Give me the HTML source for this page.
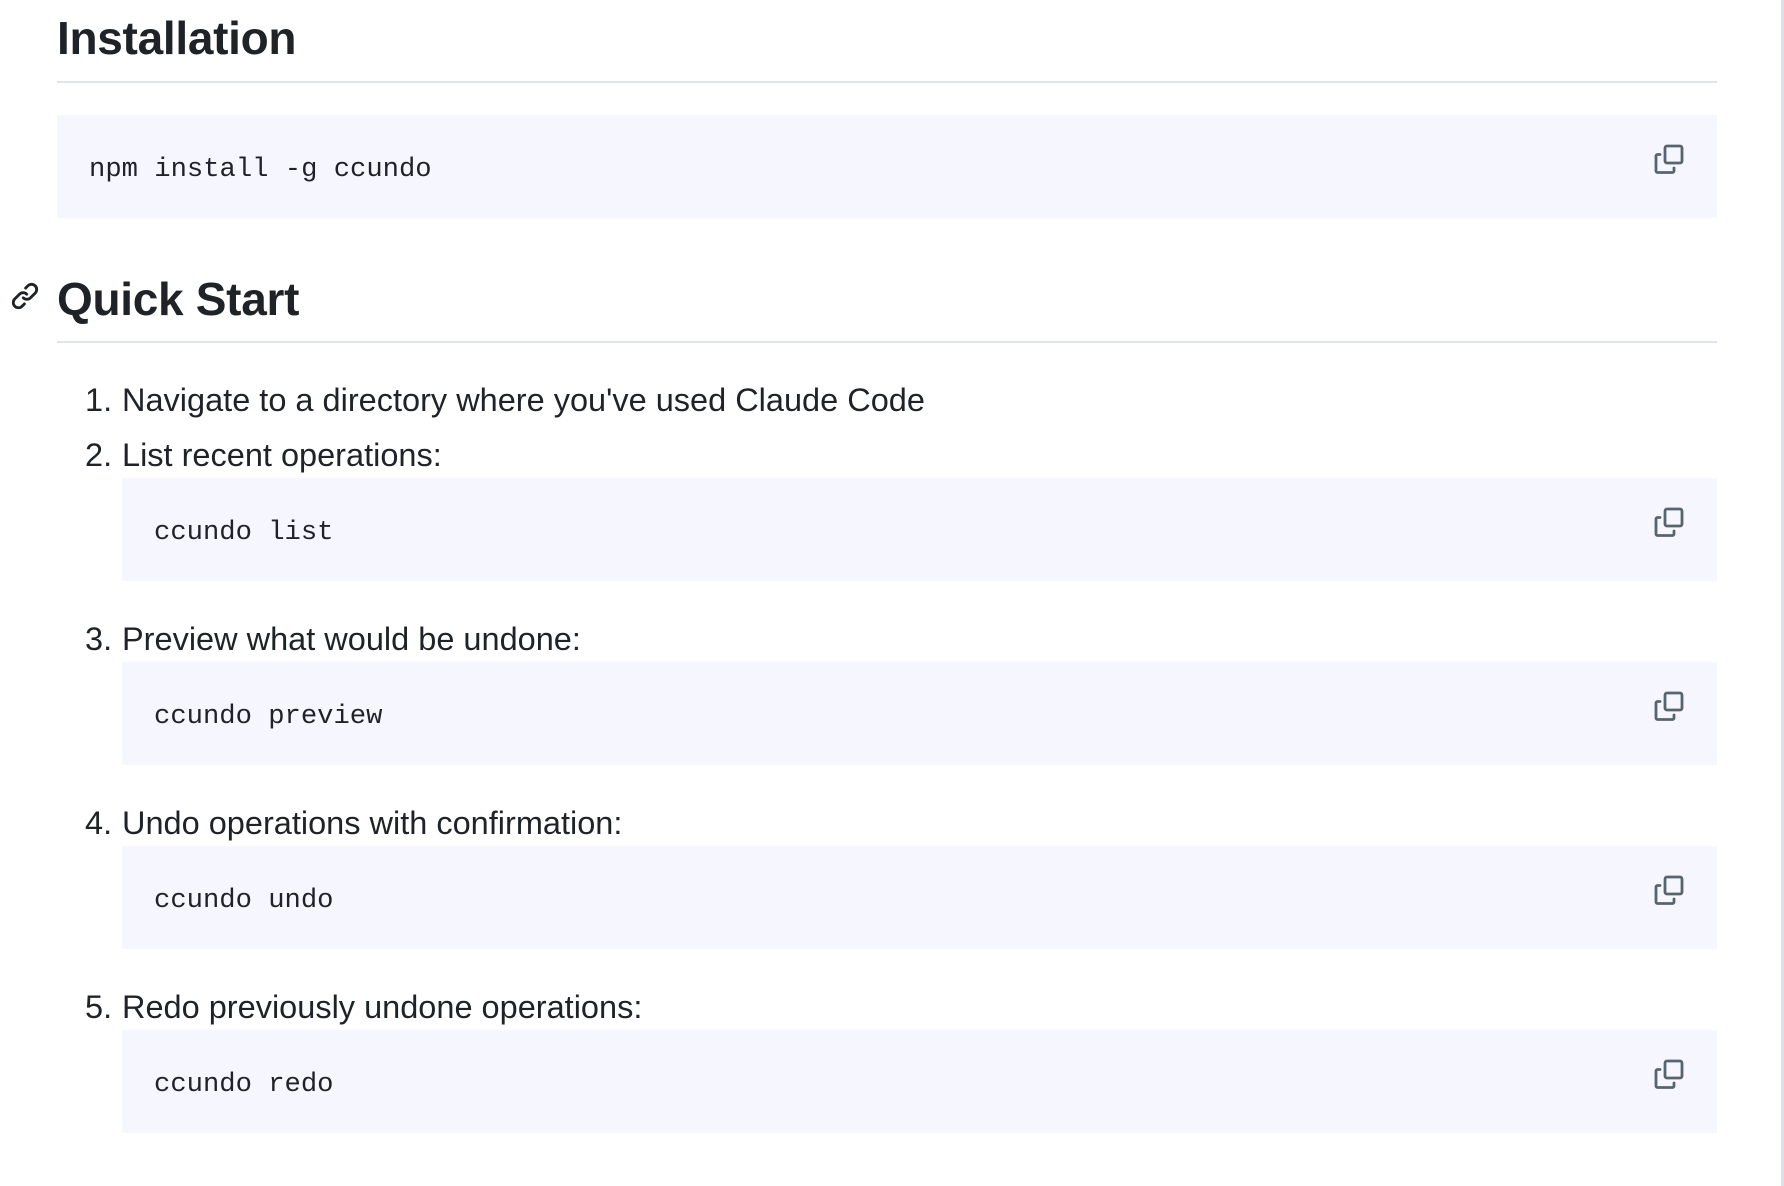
<!DOCTYPE html>
<html><head><meta charset="utf-8"><style>
html,body{margin:0;padding:0;background:#fff;}
body{width:1784px;height:1186px;position:relative;overflow:hidden;font-family:"Liberation Sans",sans-serif;color:#1f2328;}
.a{position:absolute;white-space:nowrap;}
h2{margin:0;position:absolute;left:57px;font-size:46px;line-height:46px;font-weight:700;letter-spacing:-0.3px;}
.hr{position:absolute;left:57px;width:1660px;height:2px;background:#dfe3ea;}
.blk{position:absolute;left:122px;width:1595px;height:103px;background:#f6f7fe;}
.code{position:absolute;font-family:"Liberation Mono",monospace;font-size:27.2px;line-height:27.2px;top:41px;color:#1f2328;}
.li{position:absolute;font-size:32.5px;line-height:32.5px;}
.num{position:absolute;left:85px;}
.copy{position:absolute;width:34px;height:34px;}
</style></head><body>
<h2 style="top:15px">Installation</h2>
<div class="hr" style="top:81px"></div>
<div class="blk" style="top:115px;left:57px;width:1660px"><div class="code" style="left:32px">npm install -g ccundo</div></div>

<svg class="a" style="left:10px;top:281px" width="30" height="30" viewBox="0 0 16 16"><path fill="#1f2328" d="m7.775 3.275 1.250-1.25a3.5 3.5 0 1 1 4.95 4.95l-2.5 2.5a3.5 3.5 0 0 1-4.95 0 .751.751 0 0 1 .018-1.042.751.751 0 0 1 1.042-.018 1.998 1.998 0 0 0 2.83 0l2.5-2.5a2.002 2.002 0 0 0-2.830-2.83l-1.25 1.25a.751.751 0 0 1-1.042-.018.751.751 0 0 1-.018-1.042Zm-4.69 9.64a1.998 1.998 0 0 0 2.83 0l1.25-1.25a.751.751 0 0 1 1.042.018.751.751 0 0 1 .018 1.042l-1.25 1.25a3.5 3.5 0 1 1-4.95-4.950l2.5-2.5a3.5 3.5 0 0 1 4.95 0 .751.751 0 0 1-.018 1.042.751.751 0 0 1-1.042.018 1.998 1.998 0 0 0-2.83 0l-2.5 2.5a1.998 1.998 0 0 0 0 2.83Z"/></svg>
<h2 style="top:276px">Quick Start</h2>
<div class="hr" style="top:341px"></div>

<div class="li" style="top:384px"><span class="a num">1.</span><span class="a" style="left:122px">Navigate to a directory where you've used Claude Code</span></div>
<div class="li" style="top:439px"><span class="a num">2.</span><span class="a" style="left:122px">List recent operations:</span></div>
<div class="blk" style="top:478px"><div class="code" style="left:32px">ccundo list</div></div>
<div class="li" style="top:623px"><span class="a num">3.</span><span class="a" style="left:122px">Preview what would be undone:</span></div>
<div class="blk" style="top:662px"><div class="code" style="left:32px">ccundo preview</div></div>
<div class="li" style="top:807px"><span class="a num">4.</span><span class="a" style="left:122px">Undo operations with confirmation:</span></div>
<div class="blk" style="top:846px"><div class="code" style="left:32px">ccundo undo</div></div>
<div class="li" style="top:991px"><span class="a num">5.</span><span class="a" style="left:122px">Redo previously undone operations:</span></div>
<div class="blk" style="top:1030px"><div class="code" style="left:32px">ccundo redo</div></div>

<svg width="0" height="0" style="position:absolute"><defs><g id="cp" fill="none" stroke="#59636e" stroke-width="2.8" stroke-linejoin="round" stroke-linecap="round"><rect x="13" y="3" width="17" height="17" rx="2"/><path d="M8 11.5H5.5a1.5 1.5 0 0 0-1.5 1.5v15a1.5 1.5 0 0 0 1.5 1.5h15a1.5 1.5 0 0 0 1.5-1.5V25"/></g></defs></svg>
<svg class="copy" style="left:1652px;top:143px" viewBox="0 0 34 34"><use href="#cp"/></svg>
<svg class="copy" style="left:1652px;top:506px" viewBox="0 0 34 34"><use href="#cp"/></svg>
<svg class="copy" style="left:1652px;top:690px" viewBox="0 0 34 34"><use href="#cp"/></svg>
<svg class="copy" style="left:1652px;top:874px" viewBox="0 0 34 34"><use href="#cp"/></svg>
<svg class="copy" style="left:1652px;top:1058px" viewBox="0 0 34 34"><use href="#cp"/></svg>

<div class="a" style="left:1781px;top:0;width:3px;height:1186px;background:#dfe1e8"></div>
</body></html>
